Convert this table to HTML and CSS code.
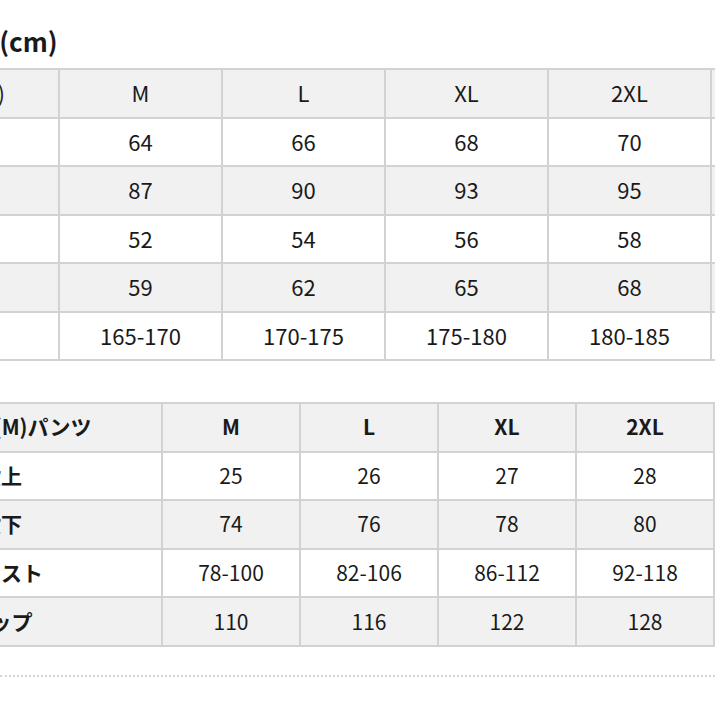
FILE: index.html
```html
<!DOCTYPE html>
<html lang="ja">
<head>
<meta charset="utf-8">
<link rel="stylesheet" href="styles.css">
</head>
<body>
<div class="page">
  <h2 class="title">サイズ表(cm)</h2>
  <table class="chart chart-top">
    <colgroup>
      <col class="c-label"><col class="c-size"><col class="c-size"><col class="c-size"><col class="c-size"><col class="c-size">
    </colgroup>
    <tr class="head"><td>サイズ(cm)</td><td>M</td><td>L</td><td>XL</td><td>2XL</td><td>3XL</td></tr>
    <tr><td>着丈</td><td>64</td><td>66</td><td>68</td><td>70</td><td>72</td></tr>
    <tr class="alt"><td>身幅</td><td>87</td><td>90</td><td>93</td><td>95</td><td>98</td></tr>
    <tr><td>肩幅</td><td>52</td><td>54</td><td>56</td><td>58</td><td>60</td></tr>
    <tr class="alt"><td>袖丈</td><td>59</td><td>62</td><td>65</td><td>68</td><td>71</td></tr>
    <tr><td>身長</td><td>165-170</td><td>170-175</td><td>175-180</td><td>180-185</td><td>185-190</td></tr>
  </table>

  <table class="chart chart-bottom">
    <colgroup>
      <col class="c-label2"><col class="c-size2"><col class="c-size2"><col class="c-size2"><col class="c-size2"><col class="c-size2">
    </colgroup>
    <tr class="head bold"><td>サイズ表(M)パンツ</td><td>M</td><td>L</td><td>XL</td><td>2XL</td><td>3XL</td></tr>
    <tr><td class="lbl">股上</td><td>25</td><td>26</td><td>27</td><td>28</td><td>29</td></tr>
    <tr class="alt"><td class="lbl">股下</td><td>74</td><td>76</td><td>78</td><td>80</td><td>82</td></tr>
    <tr><td class="lbl">ウエスト</td><td>78-100</td><td>82-106</td><td>86-112</td><td>92-118</td><td>98-124</td></tr>
    <tr class="alt"><td class="lbl">ヒップ</td><td>110</td><td>116</td><td>122</td><td>128</td><td>134</td></tr>
  </table>

  <div class="dots"></div>
</div>
</body>
</html>
```

FILE: styles.css
```css
html, body {
  margin: 0;
  padding: 0;
  overflow: hidden;
  background: #ffffff;
}

.page {
  width: 715px;
  font-family: "Noto Sans CJK JP", "Noto Sans", sans-serif;
  color: #1a1a1a;
}

.title {
  margin: 0 0 0 -104px;
  padding-top: 25px;
  height: 43px;
  font-size: 26px;
  line-height: 32px;
  font-weight: 700;
  white-space: nowrap;
}

.chart {
  border-collapse: collapse;
  table-layout: fixed;
}

.chart td {
  border: 2px solid #d2d2d2;
  text-align: center;
  vertical-align: middle;
  padding: 0 0 2px 0;
  white-space: nowrap;
}

.chart-top {
  margin-left: -162px;
  width: 1035px;
  font-size: 22px;
}

.chart-top td {
  height: 44.5px;
}

.c-label { width: 220px; }
.c-size { width: 163px; }

.chart-bottom {
  margin-left: -161px;
  margin-top: 41px;
  width: 1012px;
  font-size: 21px;
}

.chart-bottom td {
  height: 44.6px;
}

.c-label2 { width: 322px; }
.c-size2 { width: 138px; }

.head td,
.alt td {
  background: #f1f1f1;
}

.bold td,
.lbl {
  font-weight: 700;
}

.dots {
  margin-top: 28px;
  height: 0;
  border-top: 2px dotted #d4d4d4;
}
```
